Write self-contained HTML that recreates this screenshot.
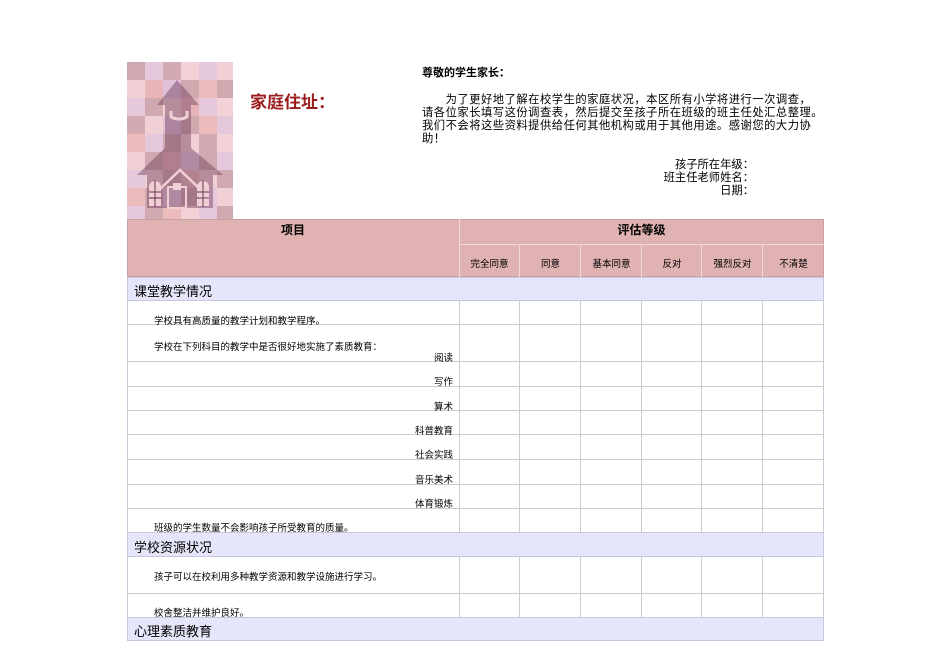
<!DOCTYPE html>
<html><head><meta charset="utf-8"><style>
body{margin:0;width:950px;height:672px;background:#fff;position:relative;font-family:"Liberation Sans","Noto Sans CJK SC",sans-serif;color:#000;overflow:hidden}
.a{position:absolute;white-space:nowrap}
.t{font-size:11.3px;line-height:13px}
.c{position:absolute;box-sizing:border-box}
.s{font-size:9.5px}
</style></head><body>
<svg class="a" style="left:127px;top:62px" width="106" height="163" viewBox="0 0 106 163">
<rect x="0" y="0" width="18" height="18" fill="#cfa8b0"/><rect x="18" y="0" width="18" height="18" fill="#e6c8dc"/><rect x="36" y="0" width="18" height="18" fill="#d4aab2"/><rect x="54" y="0" width="18" height="18" fill="#f2d2d6"/><rect x="72" y="0" width="18" height="18" fill="#e6c8dc"/><rect x="90" y="0" width="16" height="18" fill="#f0d0d4"/>
<rect x="0" y="18" width="18" height="18" fill="#f0d0d4"/><rect x="18" y="18" width="18" height="18" fill="#e8b4b8"/><rect x="36" y="18" width="18" height="18" fill="#e0c0d8"/><rect x="54" y="18" width="18" height="18" fill="#cfa8b0"/><rect x="72" y="18" width="18" height="18" fill="#ecbcbc"/><rect x="90" y="18" width="16" height="18" fill="#cfa8b0"/>
<rect x="0" y="36" width="18" height="18" fill="#e6c8dc"/><rect x="18" y="36" width="18" height="18" fill="#cfa8b0"/><rect x="36" y="36" width="18" height="18" fill="#f0d0d4"/><rect x="54" y="36" width="18" height="18" fill="#e6b4b8"/><rect x="72" y="36" width="18" height="18" fill="#e6c8dc"/><rect x="90" y="36" width="16" height="18" fill="#f2d2d6"/>
<rect x="0" y="54" width="18" height="18" fill="#d4aab2"/><rect x="18" y="54" width="18" height="18" fill="#f0d0d4"/><rect x="36" y="54" width="18" height="18" fill="#e0c0d8"/><rect x="54" y="54" width="18" height="18" fill="#cfa8b0"/><rect x="72" y="54" width="18" height="18" fill="#ecbcbc"/><rect x="90" y="54" width="16" height="18" fill="#e6c8dc"/>
<rect x="0" y="72" width="18" height="18" fill="#ecbcbc"/><rect x="18" y="72" width="18" height="18" fill="#e6c8dc"/><rect x="36" y="72" width="18" height="18" fill="#cfa8b0"/><rect x="54" y="72" width="18" height="18" fill="#f0d0d4"/><rect x="72" y="72" width="18" height="18" fill="#d4aab2"/><rect x="90" y="72" width="16" height="18" fill="#f2d2d6"/>
<rect x="0" y="90" width="18" height="18" fill="#f0d0d4"/><rect x="18" y="90" width="18" height="18" fill="#cfa8b0"/><rect x="36" y="90" width="18" height="18" fill="#e8b4b8"/><rect x="54" y="90" width="18" height="18" fill="#e6c8dc"/><rect x="72" y="90" width="18" height="18" fill="#cfa8b0"/><rect x="90" y="90" width="16" height="18" fill="#e6c8dc"/>
<rect x="0" y="108" width="18" height="18" fill="#e6c8dc"/><rect x="18" y="108" width="18" height="18" fill="#f0d0d4"/><rect x="36" y="108" width="18" height="18" fill="#d4aab2"/><rect x="54" y="108" width="18" height="18" fill="#ecbcbc"/><rect x="72" y="108" width="18" height="18" fill="#f0d0d4"/><rect x="90" y="108" width="16" height="18" fill="#cfa8b0"/>
<rect x="0" y="126" width="18" height="18" fill="#ecbcbc"/><rect x="18" y="126" width="18" height="18" fill="#cfa8b0"/><rect x="36" y="126" width="18" height="18" fill="#e6c8dc"/><rect x="54" y="126" width="18" height="18" fill="#cfa8b0"/><rect x="72" y="126" width="18" height="18" fill="#e6c8dc"/><rect x="90" y="126" width="16" height="18" fill="#f0d0d4"/>
<rect x="0" y="144" width="18" height="19" fill="#e6c8dc"/><rect x="18" y="144" width="18" height="19" fill="#d4aab2"/><rect x="36" y="144" width="18" height="19" fill="#ecbcbc"/><rect x="54" y="144" width="18" height="19" fill="#f2d2d6"/><rect x="72" y="144" width="18" height="19" fill="#e6c8dc"/><rect x="90" y="144" width="16" height="19" fill="#cfa8b0"/>
<g fill="rgba(110,60,90,0.45)">
<polygon points="50,18 30,43 38,43 38,86 10,113 20,113 20,146 86,146 86,113 96,113 64,86 64,43 72,43"/>
</g>
<path d="M44,49 v6 q8,4 16,0 v-6" stroke="#f0d0d4" stroke-width="3" fill="none"/>
<path d="M32,128 L53,108 L74,128" stroke="#f0d0d4" stroke-width="2.5" fill="none"/>
<rect x="41" y="125" width="18" height="21" fill="none" stroke="#f0d0d4" stroke-width="2"/>
<rect x="46" y="121" width="8" height="7" fill="#f0d0d4"/>
<g fill="#f0d0d4"><path d="M22,135 v-10 a6,6 0 0 1 12,0 v10z"/><path d="M70,135 v-10 a6,6 0 0 1 12,0 v10z"/><rect x="22" y="137" width="12" height="7"/><rect x="70" y="137" width="12" height="7"/></g>
<g stroke="rgba(110,60,90,0.7)" stroke-width="1.5"><line x1="28" y1="118" x2="28" y2="145"/><line x1="76" y1="118" x2="76" y2="145"/><line x1="22" y1="130" x2="34" y2="130"/><line x1="70" y1="130" x2="82" y2="130"/></g>
</svg>
<div class="a" style="left:250px;top:88px;font-size:17px;font-weight:bold;color:#9b1c1c">家庭住址：</div>
<div class="a" style="left:422px;top:64px;font-size:11px;font-weight:bold">尊敬的学生家长：</div>
<div class="a t" style="left:422px;top:94px;letter-spacing:0.5px">　　为了更好地了解在校学生的家庭状况，本区所有小学将进行一次调查，<br>请各位家长填写这份调查表，然后提交至孩子所在班级的班主任处汇总整理。<br>我们不会将这些资料提供给任何其他机构或用于其他用途。感谢您的大力协<br>助！</div>
<div class="a t" style="right:196px;top:159px;text-align:right">孩子所在年级：<br>班主任老师姓名：<br>日期：</div>

<div class="c" style="left:127px;top:219px;width:697px;height:58px;background:#e0b2b2;border:1px solid #c8a0a0"></div>
<div class="c" style="left:459px;top:219px;width:1px;height:58px;background:#f0d8d8"></div>
<div class="c" style="left:459px;top:244px;width:365px;height:1px;background:#f0d8d8"></div>
<div class="a" style="left:127px;top:221px;width:332px;text-align:center;font-size:12px;font-weight:bold">项目</div>
<div class="a" style="left:459px;top:221px;width:365px;text-align:center;font-size:12px;font-weight:bold">评估等级</div>
<div class="a s" style="left:459px;top:256px;width:61px;text-align:center">完全同意</div>
<div class="a s" style="left:520px;top:256px;width:61px;text-align:center">同意</div>
<div class="a s" style="left:581px;top:256px;width:61px;text-align:center">基本同意</div>
<div class="a s" style="left:642px;top:256px;width:60px;text-align:center">反对</div>
<div class="a s" style="left:702px;top:256px;width:61px;text-align:center">强烈反对</div>
<div class="a s" style="left:763px;top:256px;width:61px;text-align:center">不清楚</div>
<div class="c" style="left:519px;top:245px;width:1px;height:32px;background:#f0d8d8"></div>
<div class="c" style="left:580px;top:245px;width:1px;height:32px;background:#f0d8d8"></div>
<div class="c" style="left:641px;top:245px;width:1px;height:32px;background:#f0d8d8"></div>
<div class="c" style="left:701px;top:245px;width:1px;height:32px;background:#f0d8d8"></div>
<div class="c" style="left:762px;top:245px;width:1px;height:32px;background:#f0d8d8"></div>

<div class="c" style="left:127px;top:277px;width:697px;height:364px;border:1px solid #c8c8d8;border-top:none"></div>
<div class="c" style="left:459px;top:300px;width:1px;height:232px;background:#ccc"></div>
<div class="c" style="left:519px;top:300px;width:1px;height:232px;background:#ccc"></div>
<div class="c" style="left:580px;top:300px;width:1px;height:232px;background:#ccc"></div>
<div class="c" style="left:641px;top:300px;width:1px;height:232px;background:#ccc"></div>
<div class="c" style="left:701px;top:300px;width:1px;height:232px;background:#ccc"></div>
<div class="c" style="left:762px;top:300px;width:1px;height:232px;background:#ccc"></div>
<div class="c" style="left:459px;top:557px;width:1px;height:60px;background:#ccc"></div>
<div class="c" style="left:519px;top:557px;width:1px;height:60px;background:#ccc"></div>
<div class="c" style="left:580px;top:557px;width:1px;height:60px;background:#ccc"></div>
<div class="c" style="left:641px;top:557px;width:1px;height:60px;background:#ccc"></div>
<div class="c" style="left:701px;top:557px;width:1px;height:60px;background:#ccc"></div>
<div class="c" style="left:762px;top:557px;width:1px;height:60px;background:#ccc"></div>

<div class="c" style="left:127px;top:324px;width:697px;height:1px;background:#ccc"></div>
<div class="c" style="left:127px;top:361px;width:697px;height:1px;background:#ccc"></div>
<div class="c" style="left:127px;top:386px;width:697px;height:1px;background:#ccc"></div>
<div class="c" style="left:127px;top:410px;width:697px;height:1px;background:#ccc"></div>
<div class="c" style="left:127px;top:434px;width:697px;height:1px;background:#ccc"></div>
<div class="c" style="left:127px;top:459px;width:697px;height:1px;background:#ccc"></div>
<div class="c" style="left:127px;top:484px;width:697px;height:1px;background:#ccc"></div>
<div class="c" style="left:127px;top:508px;width:697px;height:1px;background:#ccc"></div>
<div class="c" style="left:127px;top:593px;width:697px;height:1px;background:#ccc"></div>

<div class="c" style="left:127px;top:277px;width:697px;height:24px;background:#e6e6fa;border:1px solid #c8c8dc"></div>
<div class="c" style="left:127px;top:532px;width:697px;height:25px;background:#e6e6fa;border:1px solid #c8c8dc"></div>
<div class="c" style="left:127px;top:617px;width:697px;height:24px;background:#e6e6fa;border:1px solid #c8c8dc"></div>
<div class="a" style="left:134px;top:281px;font-size:13px">课堂教学情况</div>
<div class="a" style="left:134px;top:537px;font-size:13px">学校资源状况</div>
<div class="a" style="left:134px;top:621px;font-size:13px">心理素质教育</div>

<div class="a s" style="left:154px;top:313px">学校具有高质量的教学计划和教学程序。</div>
<div class="a s" style="left:154px;top:339px">学校在下列科目的教学中是否很好地实施了素质教育：</div>
<div class="a s" style="right:497px;top:350px">阅读</div>
<div class="a s" style="right:497px;top:374px">写作</div>
<div class="a s" style="right:497px;top:399px">算术</div>
<div class="a s" style="right:497px;top:423px">科普教育</div>
<div class="a s" style="right:497px;top:447px">社会实践</div>
<div class="a s" style="right:497px;top:472px">音乐美术</div>
<div class="a s" style="right:497px;top:496px">体育锻炼</div>
<div class="a s" style="left:154px;top:520px">班级的学生数量不会影响孩子所受教育的质量。</div>
<div class="a s" style="left:154px;top:569px">孩子可以在校利用多种教学资源和教学设施进行学习。</div>
<div class="a s" style="left:154px;top:605px">校舍整洁并维护良好。</div>
</body></html>
